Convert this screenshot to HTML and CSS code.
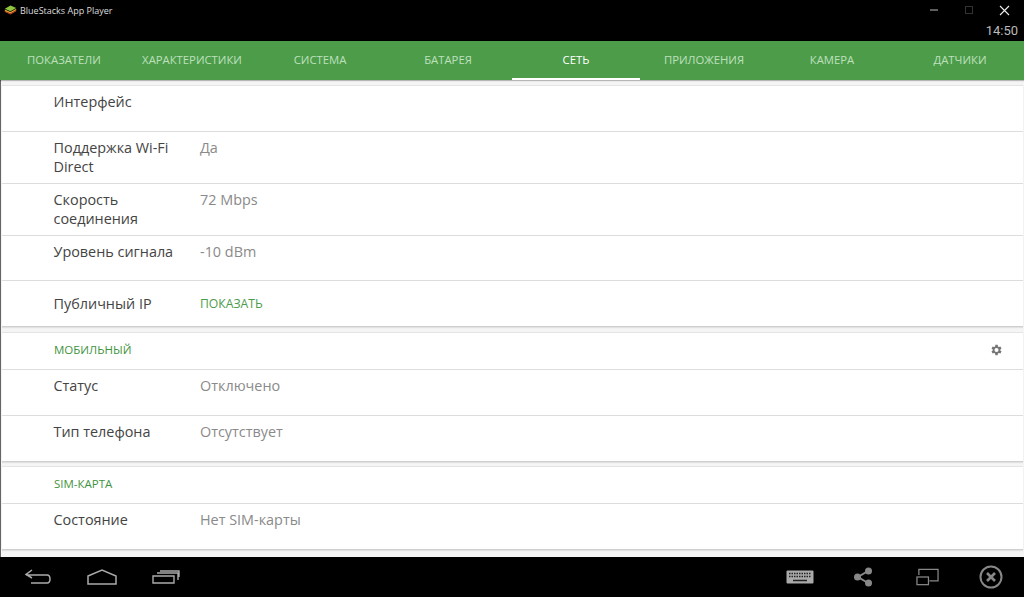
FILE: index.html
```html
<!DOCTYPE html>
<html lang="ru">
<head>
<meta charset="utf-8">
<title>BlueStacks App Player</title>
<link rel="stylesheet" href="styles.css">
</head>
<body>
<div class="app">
  <header class="titlebar">
    <div class="title-left">
      <svg class="logo" width="13" height="11" viewBox="0 0 16 12"><path d="M1 5 8 1l7 3-7 4z" fill="#8fc63f"/><path d="M1 6l7 3 7-4v2l-7 4-7-3z" fill="#e9a12c"/><path d="M1 8l7 3 7-4v1l-7 4-7-3z" fill="#c8452f"/></svg>
      <span class="app-name">BlueStacks App Player</span>
    </div>
    <div class="title-right">
      <div class="win-controls">
        <svg width="10" height="10" viewBox="0 0 10 10"><path d="M1 5h8" stroke="#bbb" stroke-width="1"/></svg>
        <svg width="10" height="10" viewBox="0 0 10 10"><rect x="1.5" y="1.5" width="7" height="7" fill="none" stroke="#333"/></svg>
        <svg width="11" height="11" viewBox="0 0 11 11"><path d="M1 1l9 9M10 1l-9 9" stroke="#eee" stroke-width="1.1"/></svg>
      </div>
      <div class="clock">14:50</div>
    </div>
  </header>
  <nav class="tabs">
    <div class="tab">ПОКАЗАТЕЛИ</div>
    <div class="tab">ХАРАКТЕРИСТИКИ</div>
    <div class="tab">СИСТЕМА</div>
    <div class="tab">БАТАРЕЯ</div>
    <div class="tab active">СЕТЬ</div>
    <div class="tab">ПРИЛОЖЕНИЯ</div>
    <div class="tab">КАМЕРА</div>
    <div class="tab">ДАТЧИКИ</div>
  </nav>
  <main class="content">
    <section class="card">
      <div class="row h46"><div class="label">Интерфейс</div><div class="value"></div></div>
      <div class="row h52"><div class="label">Поддержка Wi-Fi Direct</div><div class="value">Да</div></div>
      <div class="row h52"><div class="label">Скорость соединения</div><div class="value">72 Mbps</div></div>
      <div class="row h45"><div class="label">Уровень сигнала</div><div class="value">-10 dBm</div></div>
      <div class="row h45 center"><div class="label">Публичный IP</div><div class="value link">ПОКАЗАТЬ</div></div>
    </section>
    <section class="card">
      <div class="card-head"><span>МОБИЛЬНЫЙ</span>
        <svg class="gear" width="14" height="14" viewBox="0 0 24 24"><path fill="#757575" d="M19.4 13a7.500 7.500 0 0 0 0-2l2.100-1.600-2-3.500-2.500 1a7.600 7.600 0 0 0-1.700-1L14.900 3.200h-4l-.4 2.700a7.600 7.600 0 0 0-1.700 1l-2.500-1-2 3.500L6.400 11a7.500 7.500 0 0 0 0 2l-2.100 1.600 2 3.500 2.500-1a7.600 7.600 0 0 0 1.700 1l.4 2.700h4l.4-2.700a7.600 7.600 0 0 0 1.700-1l2.500 1 2-3.500zM12.900 15.500a3.500 3.500 0 1 1 0-7 3.500 3.500 0 0 1 0 7z"/></svg>
      </div>
      <div class="row h46"><div class="label">Статус</div><div class="value">Отключено</div></div>
      <div class="row h45"><div class="label">Тип телефона</div><div class="value">Отсутствует</div></div>
    </section>
    <section class="card">
      <div class="card-head"><span>SIM-КАРТА</span></div>
      <div class="row h45"><div class="label">Состояние</div><div class="value">Нет SIM-карты</div></div>
    </section>
  </main>
  <footer class="navbar">
    <div class="nav-group left">
      <svg width="28" height="18" viewBox="0 0 28 18"><path d="M8 2 2 6.500 8 10M2 7h21c4 0 4 8 0 8H7" fill="none" stroke="#aaa" stroke-width="1.500"/></svg>
      <svg width="30" height="16" viewBox="0 0 30 16"><path d="M1 7 15 1l14 6v8H1z" fill="none" stroke="#aaa" stroke-width="1.500"/></svg>
      <svg width="28" height="14" viewBox="0 0 28 14"><path d="M1 6h21v7H1zM5 3h21v7M8 1h19v6" fill="none" stroke="#aaa" stroke-width="1.400"/></svg>
    </div>
    <div class="nav-group right">
      <svg width="28" height="14" viewBox="0 0 28 14"><rect x=".5" y=".5" width="27" height="13" rx="1" fill="#aaa"/><path d="M3 3.500h22M3 6.500h22" stroke="#222" stroke-width="1.300" stroke-dasharray="1.500 1"/><path d="M7 10.500h14" stroke="#222" stroke-width="1.500"/></svg>
      <svg class="share" width="20" height="20" viewBox="0 0 20 20"><path d="M15 4 5 10l10 6" fill="none" stroke="#888" stroke-width="2"/><circle cx="15.500" cy="4" r="3.500" fill="#888"/><circle cx="4.500" cy="10" r="3.500" fill="#888"/><circle cx="15.500" cy="16" r="3.500" fill="#888"/></svg>
      <svg width="23" height="18" viewBox="0 0 24 18"><path d="M3 7V1h20v12h-9" fill="none" stroke="#888" stroke-width="1.300"/><rect x="1" y="9" width="12" height="8" fill="none" stroke="#888" stroke-width="1.300"/></svg>
      <svg width="24" height="24" viewBox="0 0 24 24"><circle cx="12" cy="12" r="10.500" fill="none" stroke="#888" stroke-width="2"/><path d="M8 8l8 8M16 8l-8 8" stroke="#888" stroke-width="2.600"/></svg>
    </div>
  </footer>
</div>
</body>
</html>
```

FILE: styles.css
```css
* { box-sizing: border-box; }
html, body { margin: 0; padding: 0; }
body { font-family: "Open Sans", "Liberation Sans", sans-serif; background: #000; }
.app { width: 1024px; height: 597px; display: flex; flex-direction: column; overflow: hidden; }

.titlebar { height: 41px; flex: none; background: #000; display: flex; justify-content: space-between; }
.title-left { display: flex; align-items: flex-start; gap: 3px; padding: 4px 0 0 4px; }
.logo { flex: none; }
.app-name { color: #ddd; font-size: 9px; line-height: 13px; }
.title-right { display: flex; flex-direction: column; align-items: flex-end; }
.win-controls { display: flex; align-items: center; gap: 25px; padding: 1px 14px 0 0; height: 19px; }
.clock { color: #bbb; font: 13px/15px Roboto, sans-serif; padding: 4px 6px 0 0; }

.tabs { height: 39px; flex: none; background: #4c9c4a; display: flex; box-shadow: 0 1px 1px rgba(0,0,0,.25); position: relative; }
.tab { width: 128px; display: flex; align-items: center; justify-content: center; color: #bfe0bd; font-size: 11.3px; padding-bottom: 2px; }
.tab.active { color: #fff; border-bottom: 2px solid #fff; padding-bottom: 0; }

.content { flex: 1; min-height: 0; background: #f5f5f5; border-left: 1px solid #666; padding: 5px 1px 0 1px; display: flex; flex-direction: column; gap: 5px; overflow: hidden; }
.card { background: #fff; border-top: 1px solid #e4e4e4; border-bottom: 1px solid #cfcfcf; box-shadow: 0 1px 1px rgba(0,0,0,.08); flex: none; }
.row { display: flex; padding: 6px 0 0 51.5px; border-bottom: 1px solid #ddd; font-size: 14.4px; line-height: 19px; }
.row:last-child { border-bottom: 0; }
.h45 { height: 45px; }
.h46 { height: 46px; }
.h52 { height: 52px; }
.row.center { padding-top: 13px; }
.label { width: 146.5px; flex: none; color: #444; }
.value { color: #8a8a8a; }
.value.link { color: #4c9c4a; font-size: 12.2px; }
.card-head { height: 37px; display: flex; align-items: center; justify-content: space-between; padding: 0 20.500px 3px 52px; border-bottom: 1px solid #ddd; color: #3f9440; font-size: 11.5px; }
.card + .card + .card { margin-top: -1px; }
.gear { flex: none; }

.navbar { height: 40px; flex: none; background: #000; display: flex; justify-content: space-between; align-items: center; }
.nav-group { display: flex; align-items: center; }
.nav-group.left { gap: 35px; padding-left: 24px; }
.nav-group.right { gap: 40px; padding-right: 21px; }
.share { margin: 0 3px 0 -1px; }
```
